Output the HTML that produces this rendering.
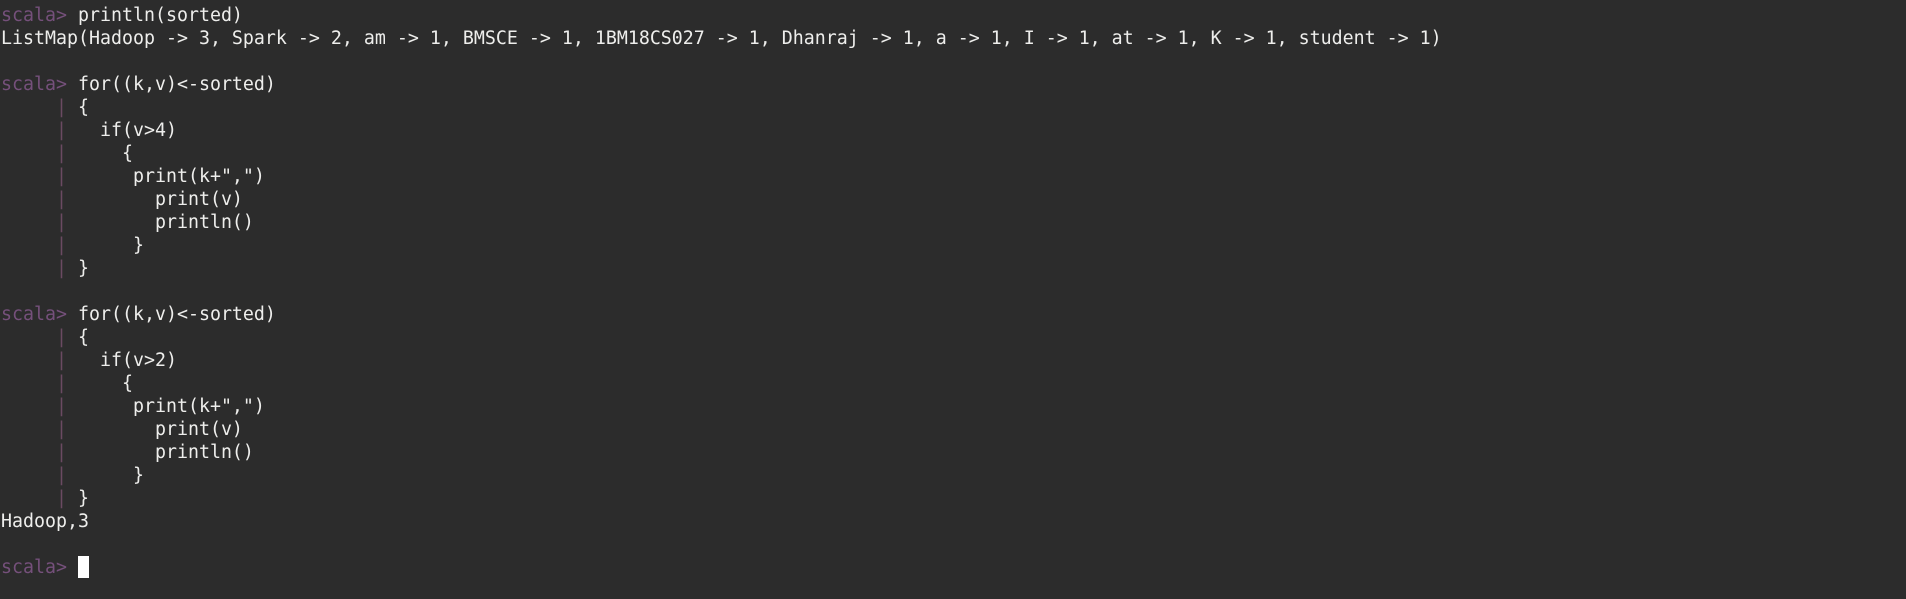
<!DOCTYPE html>
<html><head><meta charset="utf-8"><style>
html,body{margin:0;padding:0;background:#2c2c2c;width:1906px;height:599px;overflow:hidden}
pre{margin:0;padding:4px 0 0 1px;font-family:"DejaVu Sans Mono","Liberation Mono",monospace;font-size:18.27px;line-height:23px;color:#eeeeec}
.p{color:#75507b}
.b{color:#6b4a62}
.c{display:inline-block;width:11px;height:22px;background:#fff;vertical-align:-5px}
</style></head><body><pre><span class="p">scala&gt;</span> println(sorted)
ListMap(Hadoop -&gt; 3, Spark -&gt; 2, am -&gt; 1, BMSCE -&gt; 1, 1BM18CS027 -&gt; 1, Dhanraj -&gt; 1, a -&gt; 1, I -&gt; 1, at -&gt; 1, K -&gt; 1, student -&gt; 1)

<span class="p">scala&gt;</span> for((k,v)&lt;-sorted)
     <span class="b">|</span> {
     <span class="b">|</span>   if(v&gt;4)
     <span class="b">|</span>     {
     <span class="b">|</span>      print(k+",")
     <span class="b">|</span>        print(v)
     <span class="b">|</span>        println()
     <span class="b">|</span>      }
     <span class="b">|</span> }

<span class="p">scala&gt;</span> for((k,v)&lt;-sorted)
     <span class="b">|</span> {
     <span class="b">|</span>   if(v&gt;2)
     <span class="b">|</span>     {
     <span class="b">|</span>      print(k+",")
     <span class="b">|</span>        print(v)
     <span class="b">|</span>        println()
     <span class="b">|</span>      }
     <span class="b">|</span> }
Hadoop,3

<span class="p">scala&gt;</span> <span class="c"></span></pre></body></html>
